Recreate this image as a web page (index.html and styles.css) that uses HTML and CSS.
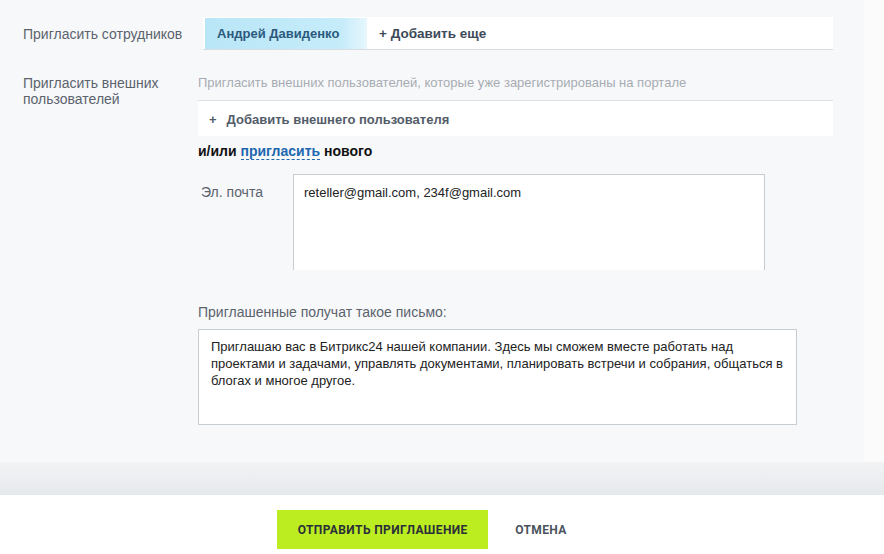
FILE: index.html
```html
<!DOCTYPE html>
<html lang="ru">
<head>
  <meta charset="UTF-8" />
  <title>Пригласить сотрудников</title>
  <link rel="stylesheet" href="styles.css">
</head>
<body>
  <div class="panel">
    <div class="row row-users">
      <div class="label">Пригласить сотрудников</div>
      <div class="users-field">
        <span class="user-tag">Андрей Давиденко</span>
        <span class="add-more">+ Добавить еще</span>
      </div>
    </div>

    <div class="row row-extranet">
      <div class="label">Пригласить внешних<br>пользователей</div>
      <div class="extranet">
        <div class="hint">Пригласить внешних пользователей, которые уже зарегистрированы на портале</div>
        <div class="add-external"><span class="plus">+</span>Добавить внешнего пользователя</div>
        <div class="or-invite">и/или <span class="invite-link">пригласить</span> нового</div>

        <div class="email-row">
          <div class="email-label">Эл. почта</div>
          <textarea class="email-input">reteller@gmail.com, 234f@gmail.com</textarea>
        </div>

        <div class="letter-title">Приглашенные получат такое письмо:</div>
        <textarea class="letter">Приглашаю вас в Битрикс24 нашей компании. Здесь мы сможем вместе работать над проектами и задачами, управлять документами, планировать встречи и собрания, общаться в блогах и многое другое.</textarea>
      </div>
    </div>
  </div>

  <div class="band"></div>

  <div class="footer">
    <button class="btn-send">Отправить приглашение</button>
    <button class="btn-cancel">Отмена</button>
  </div>
</body>
</html>
```

FILE: styles.css
```css
* { box-sizing: border-box; }
html, body {
  margin: 0;
  padding: 0;
  font-family: "Liberation Sans", Arial, sans-serif;
  background: #fbfbfc;
  overflow: hidden;
}
.panel {
  width: 864px;
  height: 462px;
  background: #f7f8fa;
  padding-top: 17px;
}
.row {
  display: grid;
  grid-template-columns: 198px 635px;
}
.label {
  padding-left: 23px;
  font-size: 14px;
  line-height: 16px;
  color: #5b636d;
}
.row-users .label {
  padding-top: 9px;
}
.users-field {
  margin-left: 5px;
  height: 33px;
  background: #fff;
  border-bottom: 1px solid #d9dde1;
  display: flex;
  align-items: center;
}
.user-tag {
  height: 31px;
  width: 162px;
  margin-left: 2px;
  padding-left: 12px;
  display: flex;
  align-items: center;
  background: linear-gradient(90deg, #b9e6f7, #c6ecfa 85%, #e8f7fd);
  color: #2b5a7e;
  font-weight: bold;
  font-size: 13px;
}
.add-more {
  margin-left: 12px;
  font-size: 13.5px;
  font-weight: bold;
  color: #3d4a58;
}
.row-extranet {
  margin-top: 25px;
}
.hint {
  font-size: 13px;
  color: #a7acb2;
  line-height: 16px;
  padding-bottom: 9px;
  border-bottom: 1px solid #dde1e5;
}
.add-external {
  height: 35px;
  padding-top: 1px;
  background: #fff;
  display: flex;
  align-items: center;
  padding-left: 11px;
  font-size: 13px;
  font-weight: bold;
  color: #535c69;
}
.plus {
  margin-right: 10px;
}
.or-invite {
  margin-top: 7px;
  font-size: 14px;
  font-weight: bold;
  color: #111;
  line-height: 16px;
}
.invite-link {
  color: #2067b0;
  border-bottom: 1px dashed #2067b0;
}
.email-row {
  display: flex;
  margin-top: 15px;
}
.email-label {
  width: 95px;
  padding: 10px 0 0 3px;
  font-size: 14px;
  color: #5b636d;
}
textarea {
  resize: none;
  font-family: "Liberation Sans", Arial, sans-serif;
  font-size: 13px;
  line-height: 17px;
  color: #222;
  background: #fff;
  border: 1px solid #c6cdd3;
  outline: none;
  margin: 0;
}
.email-input {
  width: 472px;
  height: 96px;
  padding: 9px 10px;
  border-bottom: none;
}
.letter-title {
  margin-top: 34px;
  font-size: 14px;
  line-height: 16px;
  color: #5b636d;
}
.letter {
  display: block;
  margin-top: 9px;
  width: 599px;
  height: 96px;
  padding: 8px 12px;
}
.band {
  height: 33px;
  background: linear-gradient(#f2f3f5, #e6e9ec);
}
.footer {
  height: 59px;
  background: #fff;
  display: flex;
  justify-content: center;
  align-items: flex-start;
  padding: 15px 20px 0 0;
  gap: 7px;
}
button {
  border: none;
  cursor: pointer;
  font-family: Roboto, sans-serif;
  text-transform: uppercase;
  font-size: 12px;
  font-weight: bold;
  letter-spacing: 0.4px;
  color: #2b3038;
}
.btn-send {
  width: 211px;
  height: 39px;
  background: #bbed21;
}
.btn-send:hover {
  background: #d2f95f;
}
.btn-cancel {
  height: 39px;
  padding: 0 20px;
  background: transparent;
  color: #4b535c;
}
```
